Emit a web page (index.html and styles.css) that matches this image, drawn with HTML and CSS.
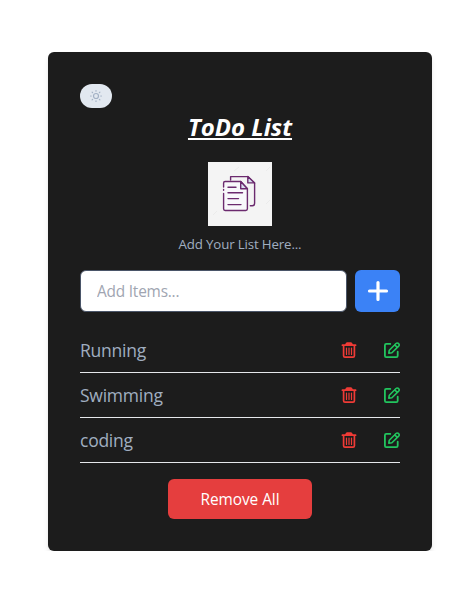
FILE: index.html
```html
<!DOCTYPE html>
<html lang="en">
<head>
<meta charset="utf-8">
<title>ToDo List</title>
<link rel="stylesheet" href="styles.css">
</head>
<body>
<svg width="0" height="0" class="defs">
  <symbol id="trash" viewBox="0 0 16 16">
    <g fill="none" stroke="currentColor" stroke-width="1.7" stroke-linecap="round" stroke-linejoin="round">
      <path d="M1.4 3.2h13.2M5 3l.9-1.8h4.2L11 3M2.6 3.5v10.2q0 1.4 1.4 1.4h8q1.4 0 1.4-1.4V3.5"/>
      <path stroke-width="1.2" d="M5.5 6v6.5M8 6v6.5M10.5 6v6.5"/>
    </g>
    <path fill="currentColor" d="M5 1h6l1 2.5H4z"/>
  </symbol>
  <symbol id="edit" viewBox="0 0 16 16">
    <g fill="none" stroke="currentColor" stroke-width="1.8" stroke-linecap="round" stroke-linejoin="round">
      <path d="M6.3 1.9H2.3Q.9 1.9.9 3.3v10.4q0 1.4 1.4 1.4h10q1.4 0 1.4-1.4V9.7"/>
      <path stroke-width="1.6" d="M4.8 11.2l.5-3L12 1.5q1.2-1 2.5 0 1.3 1.3.2 2.6l-6.8 6.6zM10.7 2.9l2.6 2.5"/>
    </g>
  </symbol>
</svg>
<main class="card">
  <button class="toggle" aria-label="Theme">
    <svg width="14" height="14" viewBox="0 0 14 14" fill="none" stroke="#a3b1c5" stroke-width="1.2" stroke-linecap="round">
      <circle cx="7" cy="7" r="2.5"/>
      <path d="M7 1.6v.6M7 11.8v.6M1.6 7h.6M11.8 7h.6M3.1 3.1l.5.5M10.4 10.4l.5.5M10.9 3.1l-.5.5M3.6 10.4l-.5.5"/>
    </svg>
  </button>
  <h1 class="title">ToDo List</h1>
  <svg class="picture" width="64" height="64" viewBox="0 0 64 64">
    <path fill="#f4f4f4" d="M0 0h64v64H0z"/>
    <path stroke="#ebebeb" d="M26 9l5-4M58 9l4-4M5 53l4-4M58 42l4-4"/>
    <g stroke="#6b2a6e" stroke-width="1.4" stroke-linecap="round" stroke-linejoin="round">
      <path fill="none" d="M22.6 18v-3.4h17.2l6.8 6.3v20.3q0 2.5-2.3 2.5h-2"/>
      <path fill="#d9dff0" d="M39.8 14.6v6.3h6.8z"/>
      <path fill="#f8f8fb" d="M15.6 25v-4q0-1.5 1.5-1.5h15.6l6.7 7.3v20q0 1.7-1.7 1.7H17.1q-1.5 0-1.5-1.7V31.5"/>
      <path fill="#d9dff0" d="M32.7 19.5v7.3h6.7z"/>
      <path fill="none" d="M15.6 27.5v.8M20 25.2h8M20 30.7h14.5M20 36.6h10.5M20 42.6h13"/>
    </g>
  </svg>
  <p class="caption">Add Your List Here...</p>
  <div class="entry">
    <input class="field" type="text" placeholder="Add Items...">
    <button class="add" aria-label="Add">
      <svg width="22" height="22" viewBox="0 0 22 22" stroke="#fff" stroke-width="3.2" stroke-linecap="round"><path d="M11 2.5v17M2.5 11h17"/></svg>
    </button>
  </div>
  <ul class="list">
    <li class="row"><span class="name">Running</span><svg class="icon trash"><use href="#trash"/></svg><svg class="icon edit"><use href="#edit"/></svg></li>
    <li class="row"><span class="name">Swimming</span><svg class="icon trash"><use href="#trash"/></svg><svg class="icon edit"><use href="#edit"/></svg></li>
    <li class="row"><span class="name">coding</span><svg class="icon trash"><use href="#trash"/></svg><svg class="icon edit"><use href="#edit"/></svg></li>
  </ul>
  <button class="remove">Remove All</button>
</main>
</body>
</html>
```
FILE: styles.css
```css
* { box-sizing: border-box; margin: 0; padding: 0; }
body { background: #fff; font-family: "Open Sans", "Noto Sans", sans-serif; padding: 52px 43px 0 48px; }
svg { display: block; }
button { border: 0; font: inherit; }
.defs { position: absolute; }
.card { width: 384px; height: 499px; padding: 32px; background: #1c1c1c; border-radius: 6px; display: flex; flex-direction: column; align-items: center; box-shadow: 0 4px 6px -1px rgba(0,0,0,.1), 0 2px 4px -2px rgba(0,0,0,.1); }
.toggle { align-self: flex-start; width: 32px; height: 24px; border-radius: 12px; background: #e2e8f0; display: flex; align-items: center; justify-content: center; }
.title { margin-top: 3px; height: 32px; line-height: 32px; font-size: 24px; font-weight: 700; font-style: italic; letter-spacing: 0; color: #fff; text-decoration: underline; text-decoration-thickness: 2px; text-underline-offset: 2px; }
.picture { margin-top: 19px; }
.caption { margin-top: 8px; line-height: 20px; font-size: 13.3px; letter-spacing: -.15px; color: #a0aec0; white-space: nowrap; }
.entry { margin-top: 16px; width: 100%; height: 42px; display: flex; gap: 8px; }
.field { flex: 1; min-width: 0; border: 1px solid #4a5568; border-radius: 6px; background: #fff; padding: 0 16px; font: 15.4px "Open Sans", sans-serif; letter-spacing: -.2px; }
.field::placeholder { color: #a0a5b1; opacity: 1; }
.add { width: 45px; border-radius: 6px; background: #3b82f6; display: flex; align-items: center; justify-content: center; }
.list { width: 100%; margin-top: 16px; list-style: none; }
.row { height: 45px; border-bottom: 1px solid #e5e7eb; display: flex; align-items: center; }
.name { flex: 1; font-size: 17.5px; letter-spacing: -.25px; color: #a0aec0; }
.icon { width: 16px; height: 16px; }
.trash { color: #ef3b36; margin-right: 27px; }
.edit { color: #22c55e; }
.remove { margin-top: 16px; width: 144px; height: 40px; border-radius: 6px; background: #e53e3e; color: #fff; font-size: 15.4px; letter-spacing: -.05px; }
```
